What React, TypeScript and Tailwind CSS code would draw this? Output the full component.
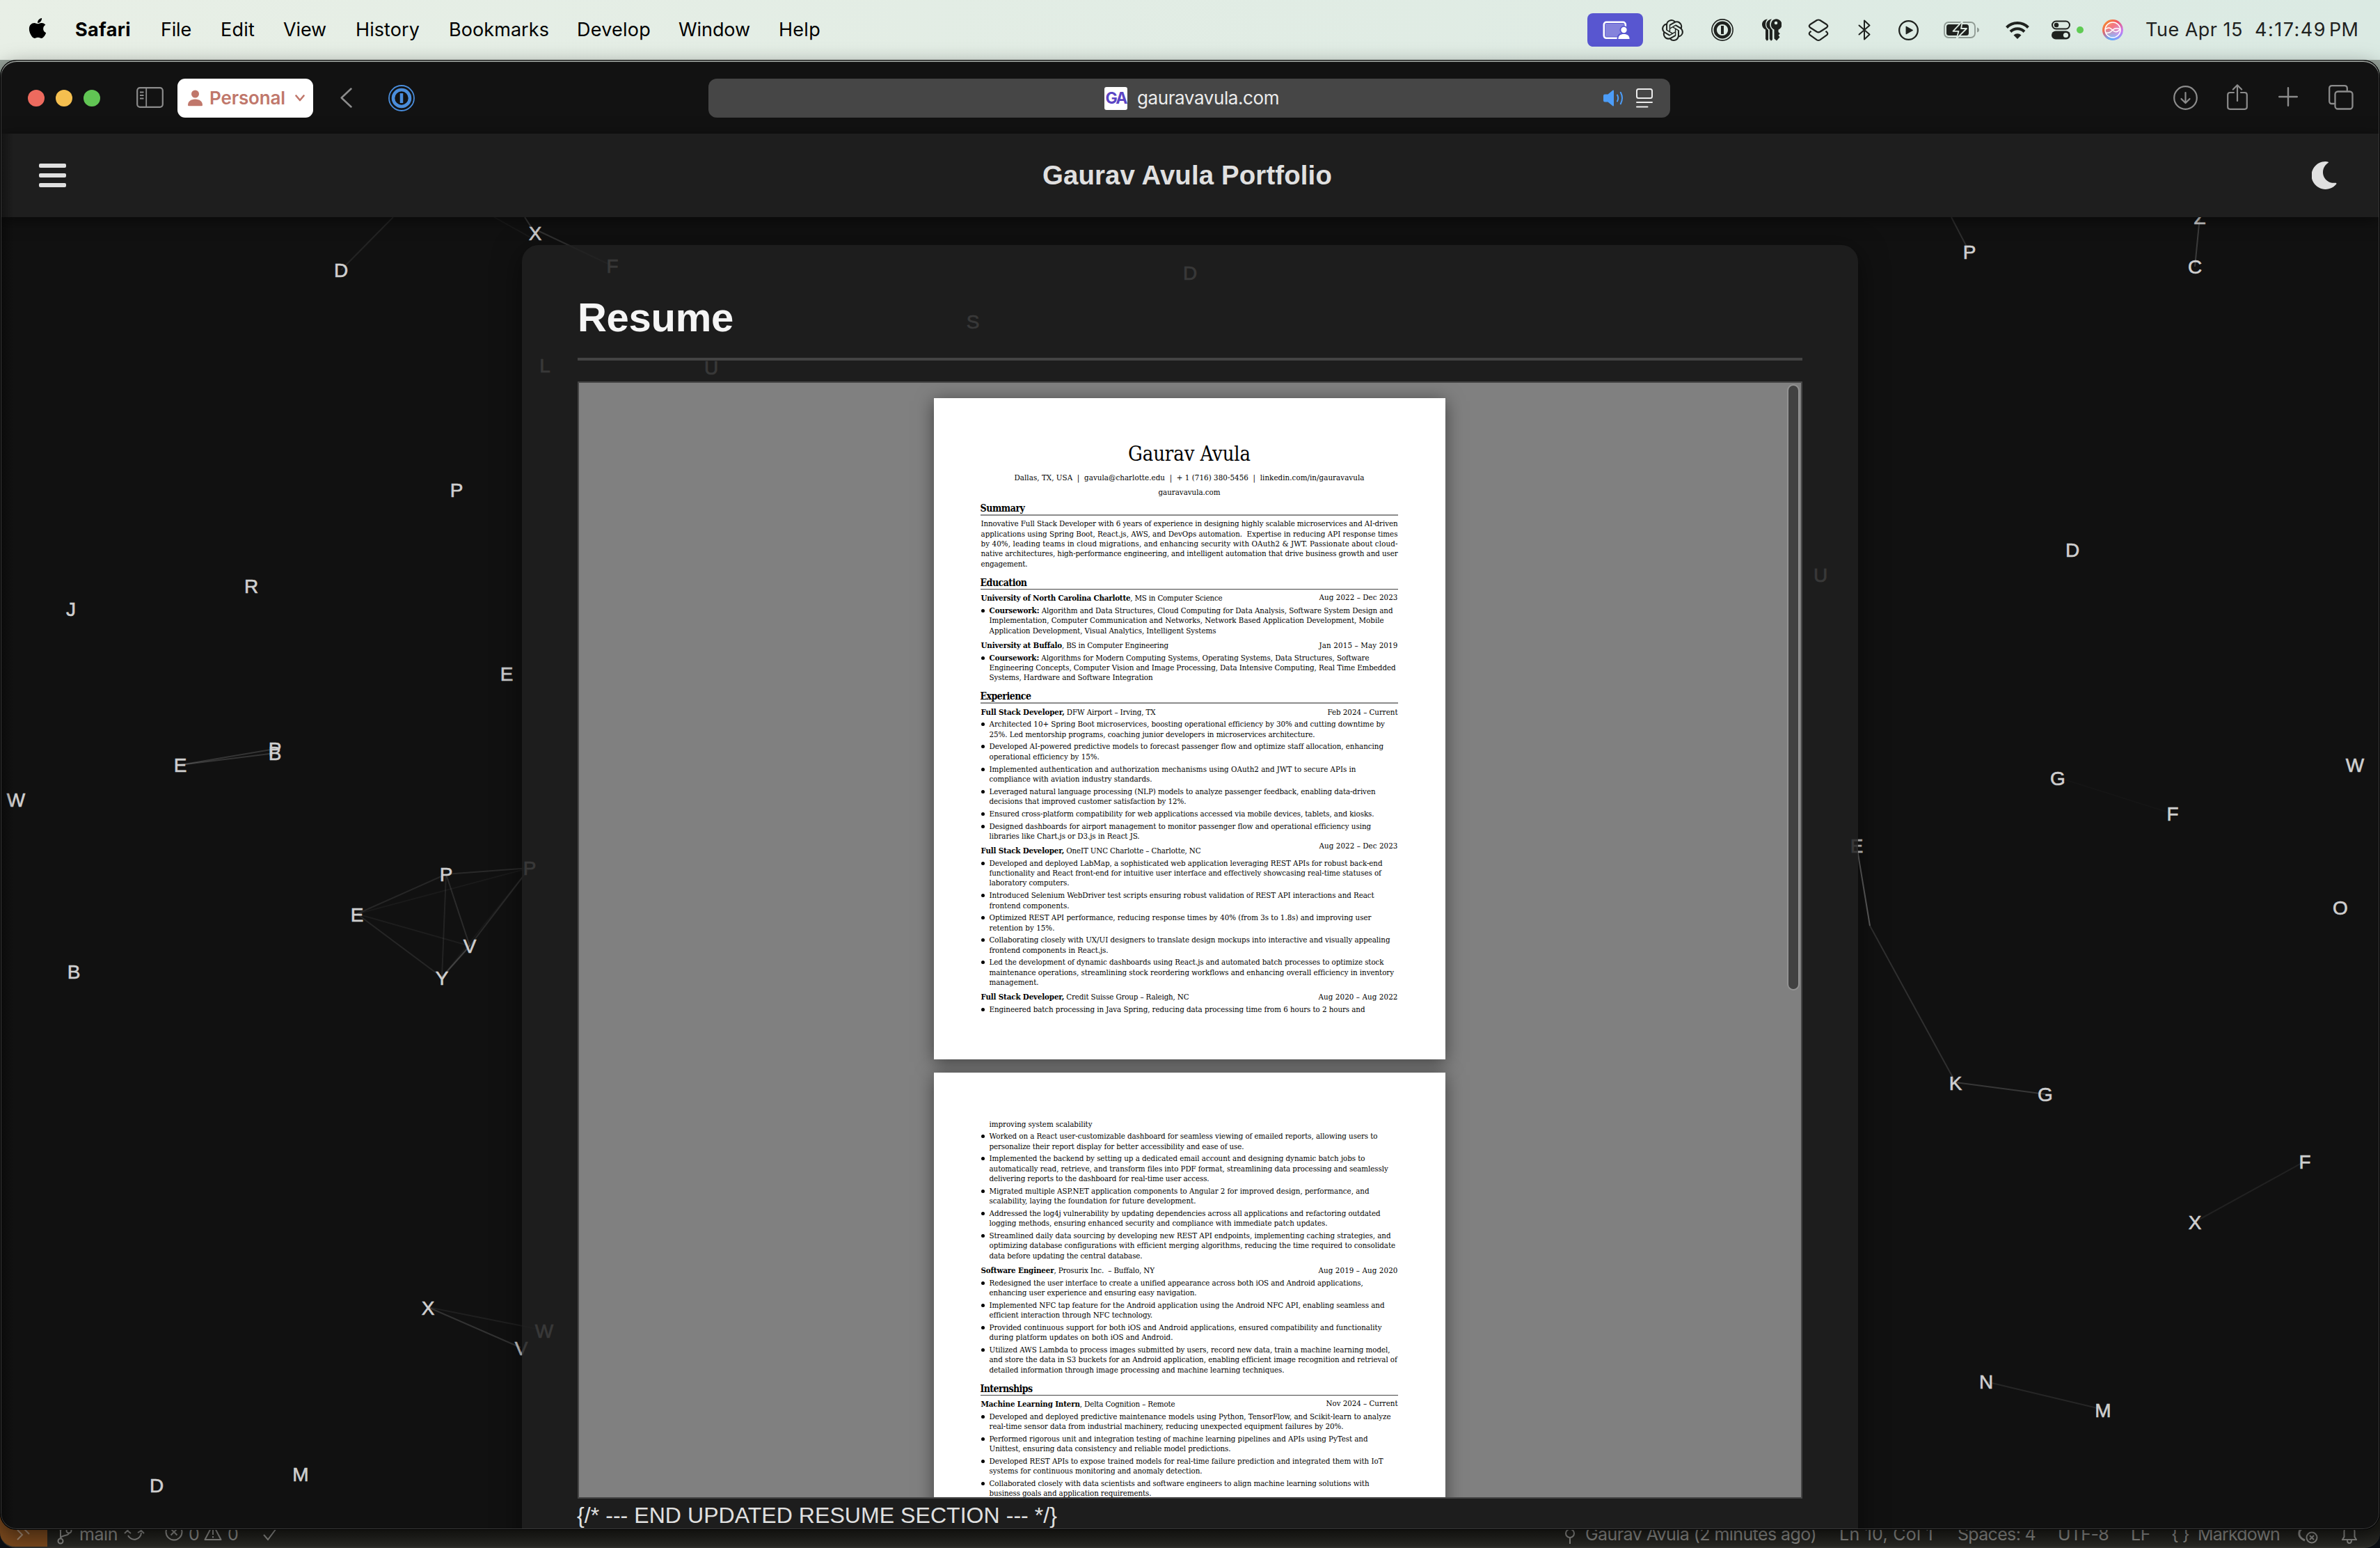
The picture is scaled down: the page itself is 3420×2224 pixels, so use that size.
import { useLayoutEffect, useRef, type ReactNode } from "react";
import { FaApple } from "react-icons/fa";
import { SiOpenai } from "react-icons/si";

/** Single-line label whose tracking is adjusted so that it spans exactly `w` pixels. */
function Fit({ w, className = "", children }: { w: number; className?: string; children: ReactNode }) {
  const ref = useRef<HTMLSpanElement>(null);
  useLayoutEffect(() => {
    const el = ref.current;
    if (!el) return;
    el.style.letterSpacing = "0px";
    const natural = el.getBoundingClientRect().width;
    const n = (el.textContent ?? "").length || 1;
    el.style.letterSpacing = `${(w - natural) / n}px`;
  }, [w]);
  return (
    <span ref={ref} className={`inline-block shrink-0 whitespace-pre ${className}`}>
      {children}
    </span>
  );
}

/* ------------------------------------------------------------------ menu bar */

const menus: { label: string; w: number; cell: string }[] = [
  { label: "File", w: 44, cell: "w-[86px]" },
  { label: "Edit", w: 49, cell: "w-[90px]" },
  { label: "View", w: 62, cell: "w-[104px]" },
  { label: "History", w: 92, cell: "w-[134px]" },
  { label: "Bookmarks", w: 144, cell: "w-[184px]" },
  { label: "Develop", w: 106, cell: "w-[146px]" },
  { label: "Window", w: 103, cell: "w-[144px]" },
  { label: "Help", w: 60, cell: "w-[80px]" },
];

function MenuBar() {
  return (
    <div className="flex h-[86px] shrink-0 items-center bg-linear-to-r from-[#e8efe6] to-[#dbeae3] text-[27px] leading-[34px] text-black">
      <FaApple className="ml-[39px] mb-[5px] h-[33px] w-[30px]" />
      <div className="ml-[39px] flex">
        <div className="w-[123px]">
          <Fit w={80} className="font-bold">Safari</Fit>
        </div>
        {menus.map((m) => (
          <div key={m.label} className={m.cell}>
            <Fit w={m.w}>{m.label}</Fit>
          </div>
        ))}
      </div>
      <div className="ml-auto flex items-center text-[#1f221f]">
        <div className="flex h-12 w-20 items-center justify-center rounded-[8px] bg-[#5856d0]">
          <svg className="ml-[3px] h-[27px] w-[40px]" viewBox="0 0 40 27" fill="none">
            <rect x="1.8" y="1.8" width="31" height="23" rx="3.5" stroke="#fff" strokeWidth="2.6" />
            <rect x="4" y="4" width="26.5" height="18.5" fill="#8583dc" />
            <circle cx="30.5" cy="13" r="6" fill="#5856d0" />
            <path d="M20.5 27c0-8 4-10 10-10s10 2 10 10z" fill="#5856d0" />
            <circle cx="30.5" cy="13" r="4.2" fill="#fff" />
            <path d="M22.4 26c0-4.500 3-7 8.100-7s8.100 2.500 8.100 7z" fill="#fff" />
          </svg>
        </div>
        <SiOpenai className="ml-[27px] size-[31px]" />
        <svg className="ml-[40px] size-8" viewBox="0 0 32 32" fill="none" stroke="currentColor">
          <circle cx="16" cy="16" r="15.1" strokeWidth="1.6" />
          <circle cx="16" cy="16" r="10.300" strokeWidth="4.400" />
          <path d="M16 10v12" strokeWidth="4" />
        </svg>
        <svg className="ml-[41px] h-8 w-[28px]" viewBox="0 0 28 32" fill="currentColor">
          <path d="M8 .5C3 .8 0 4 0 8.300c0 3.200 1.800 5.800 5 7.300V29l2 2.700 2-1.700V16C6 14 5 11 5 8.300 5 5 6 2 8 .5z" />
          <path d="M14 .5C9 1 6.200 4 6.200 8.300c0 3.200 1.800 5.800 4.600 7.300V29l2.200 2.700 2-1.700V16c-2.500-2-3.800-5-3.800-7.700C11.200 5 12 2 14 .5z" />
          <path
            fillRule="evenodd"
            d="M20 .3a8 8 0 0 1 3.500 15.400v3.300l2.300 2.300-2.300 2.500 2 2.500-4.500 5.200-3.500-3V15.500A8 8 0 0 1 20 .3zm0 3.400a2.300 2.300 0 1 0 0 4.600 2.300 2.300 0 0 0 0-4.600z"
          />
        </svg>
        <svg className="ml-[38px] h-[33px] w-[30px]" viewBox="0 0 30 33" fill="none" stroke="currentColor" strokeWidth="2.200" strokeLinejoin="round">
          <path d="M12.800 2q2.200-1 4.400 0L27 8.300q2.500 2 0 4.200l-9.800 6.300q-2.200 1.100-4.400 0L3 12.500Q.5 10.300 3 8.300z" />
          <path d="M4.600 17.800 3 19q-2.500 2.200 0 4.400l9.800 7q2.200 1.200 4.400 0l9.800-7q2.500-2.200 0-4.400l-1.600-1.200" />
        </svg>
        <svg className="ml-[41px] h-[30px] w-[20px]" viewBox="0 0 20 30" fill="none" stroke="currentColor" strokeWidth="2" strokeLinejoin="round" strokeLinecap="round">
          <path d="M2.500 8.500 17.500 21.500 10 28.500v-27l7.500 7L2.500 21.500" />
        </svg>
        <svg className="ml-[39px] size-[29px]" viewBox="0 0 28 28" fill="none">
          <circle cx="14" cy="14" r="12.900" stroke="currentColor" strokeWidth="2.200" />
          <path d="M10.200 9v10q0 .8.800.5l9-4.900q.6-.6 0-1.100l-9-5q-.8-.3-.8.5z" fill="currentColor" />
        </svg>
        <svg className="ml-[36px] h-[26px] w-[51px]" viewBox="0 0 51 26" fill="none">
          <rect x="1" y="2" width="44" height="22" rx="6" stroke="#8f9a93" strokeWidth="1.800" />
          <path d="M48 9.500q3 1 3 3.500t-3 3.500z" fill="#8f9a93" />
          <rect x="4" y="5" width="32" height="16" rx="3.500" fill="#1f221f" />
          <path d="M27 .5 13.500 14.800h8L18.500 25.500 33 11h-8z" fill="#1f221f" stroke="#deebe3" strokeWidth="1.800" strokeLinejoin="round" />
        </svg>
        <svg className="ml-[38px] h-[26px] w-[34px]" viewBox="0 0 34 26" fill="none" stroke="currentColor" strokeWidth="4">
          <path d="M1.500 9.500a22 22 0 0 1 31 0" />
          <path d="M7 15.500a14 14 0 0 1 20 0" />
          <path d="M17 26l-5.500-5.500a8 8 0 0 1 11 0z" fill="currentColor" stroke="none" />
        </svg>
        <svg className="ml-[32px] h-[28px] w-[27px]" viewBox="0 0 27 28" fill="none">
          <rect x="1" y="1.500" width="25" height="11" rx="5.500" stroke="#1f221f" strokeWidth="2" />
          <circle cx="7" cy="7" r="3.300" fill="#1f221f" />
          <rect x="0" y="15.500" width="27" height="12" rx="6" fill="#1f221f" />
          <circle cx="20.500" cy="21.500" r="3.600" fill="#deebe3" />
        </svg>
        <div className="ml-[9px] size-[10px] rounded-full bg-[#5fcb53]" />
        <svg className="ml-[27px] size-[30px]" viewBox="0 0 30 30" fill="none">
          <defs>
            <linearGradient id="siriBase" x1="0" y1="0" x2="1" y2="1">
              <stop offset="0" stopColor="#f5a623" />
              <stop offset="0.4" stopColor="#f2555f" />
              <stop offset="0.75" stopColor="#c77cf0" />
              <stop offset="1" stopColor="#58a8ff" />
            </linearGradient>
            <radialGradient id="siriBlue" cx="0.4" cy="1" r="0.600">
              <stop offset="0" stopColor="#4fb4ff" />
              <stop offset="1" stopColor="#4fb4ff" stopOpacity="0" />
            </radialGradient>
          </defs>
          <circle cx="15" cy="15" r="15" fill="url(#siriBase)" />
          <circle cx="15" cy="15" r="15" fill="url(#siriBlue)" />
          <circle cx="15" cy="15" r="11" fill="#fff" fillOpacity="0.200" stroke="#fff" strokeWidth="1.500" />
          <path d="M4.500 14c5-4 8-1 10.500 1.500s6 4 10.500-1.500M5 19c5 1 7-1 10-4s6-3 10.500-1" stroke="#fff" strokeWidth="1.500" />
        </svg>
        <div className="ml-[32px] mr-[31px] flex">
          <Fit w={140}>Tue Apr 15</Fit>
          <Fit w={103} className="ml-[17px]">4:17:49</Fit>
          <Fit w={42} className="ml-[4px]">PM</Fit>
        </div>
      </div>
    </div>
  );
}

/* ------------------------------------------------------------ browser toolbar */

function Toolbar() {
  return (
    <div className="flex h-[104px] shrink-0 items-center bg-[#121212] pt-[2px] text-[26px] leading-8 text-[#8c8c8c]">
      <div className="ml-[40px] flex gap-4">
        <div className="size-6 rounded-full bg-[#ed6a5e]" />
        <div className="size-6 rounded-full bg-[#f5bf4f]" />
        <div className="size-6 rounded-full bg-[#61c554]" />
      </div>
      <svg className="ml-[52px] mb-[2px] h-[30px] w-[39px]" viewBox="0 0 39 30" fill="none" stroke="currentColor" strokeWidth="2.200">
        <rect x="1.200" y="1.200" width="36.600" height="27.600" rx="4" />
        <path d="M14.200 1v28M5 7.500h5.500M5 12h5.500M5 16.500h5.500" strokeWidth="1.800" />
      </svg>
      <div className="ml-5 flex h-14 w-[195px] items-center rounded-[11px] bg-white text-[#c0776b]">
        <svg className="ml-[15px] h-[24px] w-[21px]" viewBox="0 0 21 24" fill="currentColor">
          <circle cx="10.500" cy="6" r="5.500" />
          <path d="M0 22c0-5 4-8.500 10.500-8.500S21 17 21 22q0 1.200-1.500 1.200h-18Q0 23.200 0 22z" />
        </svg>
        <Fit w={109} className="ml-[10px] font-semibold">Personal</Fit>
        <svg className="ml-[14px] h-[10px] w-[14px]" viewBox="0 0 14 10" fill="none" stroke="currentColor" strokeWidth="2.600" strokeLinecap="round" strokeLinejoin="round">
          <path d="M1.500 1.500 7 8l5.500-6.500" />
        </svg>
      </div>
      <svg className="ml-[39px] mb-[2px] h-[29px] w-[17px]" viewBox="0 0 17 29" fill="none" stroke="currentColor" strokeWidth="2.500" strokeLinecap="round" strokeLinejoin="round">
        <path d="M15.500 1.500 1.700 14.500l13.800 13" />
      </svg>
      <svg className="ml-[52px] size-[38px] text-[#4a8ddb]" viewBox="0 0 38 38" fill="none" stroke="currentColor">
        <circle cx="19" cy="19" r="18" strokeWidth="1.800" />
        <circle cx="19" cy="19" r="12" strokeWidth="4.600" />
        <path d="M19 12v14" strokeWidth="4.500" />
      </svg>
      <div className="ml-[422px] flex h-14 w-[1382px] items-center rounded-[12px] bg-[#464646] text-[#ececec]">
        <div className="ml-[569px] flex size-[33px] items-center justify-center rounded-[3px] bg-white text-[23px] font-bold leading-none text-[#5b45c4]">
          <Fit w={30}>GA</Fit>
        </div>
        <Fit w={204} className="ml-[14px]">gauravavula.com</Fit>
        <svg className="ml-auto h-[24px] w-[30px] text-[#4c9df8]" viewBox="0 0 30 24" fill="none" stroke="currentColor" strokeWidth="2" strokeLinecap="round">
          <path d="M2 6.500h4.500L13.500.8q1.500-.8 1.500 1v20.400q0 1.800-1.500 1L6.500 17.500H2q-2 0-2-2v-7q0-2 2-2z" fill="currentColor" stroke="none" />
          <path d="M20 7.500q2.500 4.500 0 9M24.800 3.800q4.400 8.200 0 16.400" />
        </svg>
        <svg className="ml-[17px] mr-[25px] h-[28px] w-[24px]" viewBox="0 0 24 28" fill="none" stroke="currentColor" strokeWidth="2" strokeLinecap="round">
          <rect x="1" y="1" width="22" height="13" rx="2.500" />
          <path d="M1 20h22M1 26.500h15.500" />
        </svg>
      </div>
      <svg className="ml-auto mb-[2px] size-[35px]" viewBox="0 0 35 35" fill="none" stroke="currentColor" strokeWidth="2.200" strokeLinecap="round" strokeLinejoin="round">
        <circle cx="17.500" cy="17.500" r="16.300" />
        <path d="M17.500 10v14.500M11.500 19l6 6 6-6" />
      </svg>
      <svg className="ml-[42px] mb-[4px] h-[37px] w-[30px]" viewBox="0 0 30 37" fill="none" stroke="currentColor" strokeWidth="2.200" strokeLinecap="round" strokeLinejoin="round">
        <path d="M10 12H4.500q-3.300 0-3.300 3.300v17.200q0 3.300 3.300 3.300h21q3.300 0 3.300-3.300V15.300q0-3.300-3.300-3.300H20M15 24V1.500M8.800 7.500 15 1.200l6.200 6.300" />
      </svg>
      <svg className="ml-[44px] mb-[4px] size-[28px]" viewBox="0 0 28 28" fill="none" stroke="currentColor" strokeWidth="2.400" strokeLinecap="round">
        <path d="M14 1.200v25.600M1.200 14h25.600" />
      </svg>
      <svg className="ml-[44px] mb-[2px] mr-[38px] size-[36px]" viewBox="0 0 36 36" fill="none" stroke="currentColor" strokeWidth="2.300" strokeLinecap="round" strokeLinejoin="round">
        <rect x="9.500" y="9.500" width="25" height="25" rx="4" />
        <path d="M8 27H5q-3.800 0-3.800-3.800V5Q1.200 1.200 5 1.200h18q3.800 0 3.800 3.800v2.800" />
      </svg>
    </div>
  );
}

/* -------------------------------------------------------- letter network field */

const letters: [string, number, number][] = [
  ["D", 490, 388], ["X", 769, 335], ["F", 880, 382], ["D", 1710, 392], ["S", 1398, 462],
  ["L", 783, 525], ["U", 1022, 528], ["P", 2830, 362], ["Z", 3161, 312], ["C", 3154, 383],
  ["P", 656, 704], ["J", 102, 875], ["R", 361, 842], ["E", 728, 968], ["E", 259, 1099],
  ["P", 395, 1076], ["B", 395, 1082], ["W", 23, 1149], ["P", 641, 1256], ["P", 761, 1247],
  ["E", 513, 1314], ["V", 675, 1359], ["Y", 635, 1405], ["B", 106, 1396], ["X", 615, 1879],
  ["V", 749, 1937], ["W", 782, 1912], ["D", 225, 2134], ["M", 432, 2118], ["U", 2616, 826],
  ["D", 2978, 790], ["W", 3384, 1099], ["G", 2957, 1118], ["F", 3122, 1169], ["E", 2668, 1215],
  ["O", 3363, 1304], ["K", 2810, 1556], ["G", 2939, 1572], ["F", 3312, 1669], ["X", 3154, 1756],
  ["N", 2854, 1985], ["M", 3022, 2026],
];

const links: [number, number, number, number, number][] = [
  [490, 388, 565, 312, 0.08], [769, 335, 754, 312, 0.16], [710, 312, 769, 345, 0.04], [770, 330, 880, 382, 0.14],
  [2804, 312, 2830, 362, 0.12], [3161, 312, 3154, 383, 0.18], [259, 1099, 395, 1076, 0.15], [259, 1099, 395, 1082, 0.15],
  [641, 1256, 513, 1313, 0.09], [641, 1256, 761, 1247, 0.1], [641, 1256, 675, 1359, 0.11], [641, 1256, 635, 1404, 0.08],
  [513, 1313, 675, 1359, 0.05], [513, 1313, 635, 1404, 0.09], [675, 1359, 635, 1404, 0.2], [761, 1247, 675, 1359, 0.1],
  [761, 1247, 513, 1313, 0.04], [761, 1247, 635, 1404, 0.03], [615, 1878, 748, 1936, 0.14], [615, 1878, 781, 1911, 0.06],
  [2668, 1215, 2687, 1330, 0.32], [2687, 1330, 2810, 1555, 0.13], [2810, 1555, 2939, 1572, 0.16], [3311, 1669, 3153, 1756, 0.07],
  [2854, 1985, 3022, 2025, 0.09], [2957, 1117, 3122, 1169, 0.02],
];

function LetterField() {
  return (
    <svg className="absolute inset-0 h-full w-full" viewBox="0 312 3420 1885" preserveAspectRatio="xMinYMin slice">
      {links.map(([x1, y1, x2, y2, o], i) => (
        <line key={i} x1={x1} y1={y1} x2={x2} y2={y2} stroke="#fff" strokeOpacity={o} strokeWidth="2" />
      ))}
      {letters.map(([ch, x, y], i) => (
        <text
          key={i}
          x={x}
          y={y + 10}
          textAnchor="middle"
          fill="#cfcfcf"
          stroke="#cfcfcf"
          strokeWidth="0.6"
          className="font-['Liberation_Sans',sans-serif] text-[28px]"
        >
          {ch}
        </text>
      ))}
    </svg>
  );
}

/* --------------------------------------------------------------- PDF document */

type Row =
  | { k: "rule"; y: number; thin?: boolean }
  | { k: "head"; y: number; w: number; t: string }
  | { k: "name" | "center" | "para"; y: number; w: number; t: string }
  | { k: "job"; y: number; w: number; b: string; t: string; date: string; dw: number; lift?: number }
  | { k: "item" | "cont"; y: number; w: number; t: string; b?: string };

const page1: Row[] = [
  { k: "name", y: 663, w: 176, t: "Gaurav Avula" },
  { k: "center", y: 690, w: 503, t: "Dallas, TX, USA  |  gavula@charlotte.edu  |  + 1 (716) 380-5456  |  linkedin.com/in/gauravavula" },
  { k: "center", y: 711, w: 89, t: "gauravavula.com" },
  { k: "head", y: 734, w: 64, t: "Summary" },
  { k: "rule", y: 740 },
  { k: "para", y: 756, w: 599, t: "Innovative Full Stack Developer with 6 years of experience in designing highly scalable microservices and AI-driven" },
  { k: "para", y: 771, w: 599, t: "applications using Spring Boot, React.js, AWS, and DevOps automation.  Expertise in reducing API response times" },
  { k: "para", y: 785, w: 599, t: "by 40%, leading teams in cloud migrations, and enhancing security with OAuth2 & JWT. Passionate about cloud-" },
  { k: "para", y: 799, w: 599, t: "native architectures, high-performance engineering, and intelligent automation that drive business growth and user" },
  { k: "para", y: 814, w: 67, t: "engagement." },
  { k: "head", y: 841, w: 67, t: "Education" },
  { k: "rule", y: 846, thin: true },
  { k: "job", y: 863, w: 347, b: "University of North Carolina Charlotte", t: ", MS in Computer Science", date: "Aug 2022 – Dec 2023", dw: 113, lift: 1 },
  { k: "item", y: 881, w: 580, b: "Coursework:", t: " Algorithm and Data Structures, Cloud Computing for Data Analysis, Software System Design and" },
  { k: "cont", y: 895, w: 567, t: "Implementation, Computer Communication and Networks, Network Based Application Development, Mobile" },
  { k: "cont", y: 910, w: 326, t: "Application Development, Visual Analytics, Intelligent Systems" },
  { k: "job", y: 931, w: 269, b: "University at Buffalo", t: ", BS in Computer Engineering", date: "Jan 2015 – May 2019", dw: 113 },
  { k: "item", y: 949, w: 546, b: "Coursework:", t: " Algorithms for Modern Computing Systems, Operating Systems, Data Structures, Software" },
  { k: "cont", y: 963, w: 584, t: "Engineering Concepts, Computer Vision and Image Processing, Data Intensive Computing, Real Time Embedded" },
  { k: "cont", y: 977, w: 235, t: "Systems, Hardware and Software Integration" },
  { k: "head", y: 1004, w: 73, t: "Experience" },
  { k: "rule", y: 1010 },
  { k: "job", y: 1027, w: 251, b: "Full Stack Developer,", t: " DFW Airport – Irving, TX", date: "Feb 2024 – Current", dw: 101 },
  { k: "item", y: 1044, w: 568, t: "Architected 10+ Spring Boot microservices, boosting operational efficiency by 30% and cutting downtime by" },
  { k: "cont", y: 1059, w: 468, t: "25%. Led mentorship programs, coaching junior developers in microservices architecture." },
  { k: "item", y: 1076, w: 566, t: "Developed AI-powered predictive models to forecast passenger flow and optimize staff allocation, enhancing" },
  { k: "cont", y: 1091, w: 158, t: "operational efficiency by 15%." },
  { k: "item", y: 1109, w: 527, t: "Implemented authentication and authorization mechanisms using OAuth2 and JWT to secure APIs in" },
  { k: "cont", y: 1123, w: 234, t: "compliance with aviation industry standards." },
  { k: "item", y: 1141, w: 555, t: "Leveraged natural language processing (NLP) models to analyze passenger feedback, enabling data-driven" },
  { k: "cont", y: 1155, w: 283, t: "decisions that improved customer satisfaction by 12%." },
  { k: "item", y: 1173, w: 553, t: "Ensured cross-platform compatibility for web applications accessed via mobile devices, tablets, and kiosks." },
  { k: "item", y: 1191, w: 548, t: "Designed dashboards for airport management to monitor passenger flow and operational efficiency using" },
  { k: "cont", y: 1205, w: 216, t: "libraries like Chart.js or D3.js in React JS." },
  { k: "job", y: 1226, w: 316, b: "Full Stack Developer,", t: " OneIT UNC Charlotte – Charlotte, NC", date: "Aug 2022 – Dec 2023", dw: 113, lift: 7 },
  { k: "item", y: 1244, w: 565, t: "Developed and deployed LabMap, a sophisticated web application leveraging REST APIs for robust back-end" },
  { k: "cont", y: 1258, w: 563, t: "functionality and React front-end for intuitive user interface and effectively showcasing real-time statuses of" },
  { k: "cont", y: 1272, w: 115, t: "laboratory computers." },
  { k: "item", y: 1290, w: 553, t: "Introduced Selenium WebDriver test scripts ensuring robust validation of REST API interactions and React" },
  { k: "cont", y: 1305, w: 115, t: "frontend components." },
  { k: "item", y: 1322, w: 549, t: "Optimized REST API performance, reducing response times by 40% (from 3s to 1.8s) and improving user" },
  { k: "cont", y: 1337, w: 94, t: "retention by 15%." },
  { k: "item", y: 1354, w: 576, t: "Collaborating closely with UX/UI designers to translate design mockups into interactive and visually appealing" },
  { k: "cont", y: 1369, w: 171, t: "frontend components in React.js." },
  { k: "item", y: 1386, w: 567, t: "Led the development of dynamic dashboards using React.js and automated batch processes to optimize stock" },
  { k: "cont", y: 1401, w: 581, t: "maintenance operations, streamlining stock reordering workflows and enhancing overall efficiency in inventory" },
  { k: "cont", y: 1415, w: 71, t: "management." },
  { k: "job", y: 1436, w: 299, b: "Full Stack Developer,", t: " Credit Suisse Group – Raleigh, NC", date: "Aug 2020 – Aug 2022", dw: 114 },
  { k: "item", y: 1454, w: 540, t: "Engineered batch processing in Java Spring, reducing data processing time from 6 hours to 2 hours and" },
];

const page2: Row[] = [
  { k: "cont", y: 1619, w: 148, t: "improving system scalability" },
  { k: "item", y: 1636, w: 558, t: "Worked on a React user-customizable dashboard for seamless viewing of emailed reports, allowing users to" },
  { k: "cont", y: 1651, w: 366, t: "personalize their report display for better accessibility and ease of use." },
  { k: "item", y: 1668, w: 540, t: "Implemented the backend by setting up a dedicated email account and designing dynamic batch jobs to" },
  { k: "cont", y: 1683, w: 573, t: "automatically read, retrieve, and transform files into PDF format, streamlining data processing and seamlessly" },
  { k: "cont", y: 1697, w: 316, t: "delivering reports to the dashboard for real-time user access." },
  { k: "item", y: 1715, w: 546, t: "Migrated multiple ASP.NET application components to Angular 2 for improved design, performance, and" },
  { k: "cont", y: 1729, w: 297, t: "scalability, laying the foundation for future development." },
  { k: "item", y: 1747, w: 562, t: "Addressed the log4j vulnerability by updating dependencies across all applications and refactoring outdated" },
  { k: "cont", y: 1761, w: 486, t: "logging methods, ensuring enhanced security and compliance with immediate patch updates." },
  { k: "item", y: 1779, w: 577, t: "Streamlined daily data sourcing by developing new REST API endpoints, implementing caching strategies, and" },
  { k: "cont", y: 1793, w: 583, t: "optimizing database configurations with efficient merging algorithms, reducing the time required to consolidate" },
  { k: "cont", y: 1808, w: 220, t: "data before updating the central database." },
  { k: "job", y: 1829, w: 249, b: "Software Engineer", t: ", Prosurix Inc.  – Buffalo, NY", date: "Aug 2019 – Aug 2020", dw: 114 },
  { k: "item", y: 1847, w: 537, t: "Redesigned the user interface to create a unified appearance across both iOS and Android applications," },
  { k: "cont", y: 1861, w: 298, t: "enhancing user experience and ensuring easy navigation." },
  { k: "item", y: 1879, w: 568, t: "Implemented NFC tap feature for the Android application using the Android NFC API, enabling seamless and" },
  { k: "cont", y: 1893, w: 234, t: "efficient interaction through NFC technology." },
  { k: "item", y: 1911, w: 564, t: "Provided continuous support for both iOS and Android applications, ensured compatibility and functionality" },
  { k: "cont", y: 1925, w: 264, t: "during platform updates on both iOS and Android." },
  { k: "item", y: 1943, w: 576, t: "Utilized AWS Lambda to process images submitted by users, record new data, train a machine learning model," },
  { k: "cont", y: 1957, w: 586, t: "and store the data in S3 buckets for an Android application, enabling efficient image recognition and retrieval of" },
  { k: "cont", y: 1972, w: 424, t: "detailed information through image processing and machine learning techniques." },
  { k: "head", y: 1999, w: 75, t: "Internships" },
  { k: "rule", y: 2004, thin: true },
  { k: "job", y: 2021, w: 279, b: "Machine Learning Intern", t: ", Delta Cognition – Remote", date: "Nov 2024 – Current", dw: 103, lift: 1 },
  { k: "item", y: 2039, w: 577, t: "Developed and deployed predictive maintenance models using Python, TensorFlow, and Scikit-learn to analyze" },
  { k: "cont", y: 2053, w: 509, t: "real-time sensor data from industrial machinery, reducing unexpected equipment failures by 20%." },
  { k: "item", y: 2071, w: 544, t: "Performed rigorous unit and integration testing of machine learning pipelines and APIs using PyTest and" },
  { k: "cont", y: 2085, w: 347, t: "Unittest, ensuring data consistency and reliable model predictions." },
  { k: "item", y: 2103, w: 566, t: "Developed REST APIs to expose trained models for real-time failure prediction and integrated them with IoT" },
  { k: "cont", y: 2117, w: 306, t: "systems for continuous monitoring and anomaly detection." },
  { k: "item", y: 2135, w: 546, t: "Collaborated closely with data scientists and software engineers to align machine learning solutions with" },
  { k: "cont", y: 2149, w: 233, t: "business goals and application requirements." },
];

function RowView({ row, height }: { row: Row; height: number }) {
  const style = { height };
  switch (row.k) {
    case "rule":
      return (
        <div
          className={row.thin ? "-ml-px border-b border-[#444444]" : "-ml-px border-b-2 border-[#8c8c8c]"}
          style={style}
        />
      );
    case "head":
      return (
        <div className="-ml-px flex items-end text-[14px] font-bold" style={style}>
          <Fit w={row.w}>{row.t}</Fit>
        </div>
      );
    case "name":
      return (
        <div className="flex items-end justify-center pb-[1px] text-[29px] leading-[26px]" style={style}>
          <Fit w={row.w}>{row.t}</Fit>
        </div>
      );
    case "center":
      return (
        <div className="flex items-end justify-center" style={style}>
          <Fit w={row.w}>{row.t}</Fit>
        </div>
      );
    case "para":
      return (
        <div className="flex items-end" style={style}>
          <Fit w={row.w}>{row.t}</Fit>
        </div>
      );
    case "job":
      return (
        <div className="flex items-end justify-between" style={style}>
          <Fit w={row.w}>
            <b>{row.b}</b>
            {row.t}
          </Fit>
          <div style={{ paddingBottom: row.lift ?? 0 }} className="flex">
            <Fit w={row.dw}>{row.date}</Fit>
          </div>
        </div>
      );
    default:
      return (
        <div className="flex items-end" style={style}>
          <div className="flex h-[14px] w-3 shrink-0 items-center pt-px">
            {row.k === "item" && <div className="size-[5px] rounded-full bg-black" />}
          </div>
          <Fit w={row.w}>
            {row.b && <b>{row.b}</b>}
            {row.t}
          </Fit>
        </div>
      );
  }
}

function Page({ rows, top }: { rows: Row[]; top: number }) {
  let cursor = top;
  return (
    <div className="h-[950px] w-[735px] shrink-0 bg-white pl-[68px] pr-[68px] font-['DejaVu_Serif_Condensed','DejaVu_Serif',serif] text-[11.500px] leading-[14px] text-black shadow-[0_4px_24px_rgba(0,0,0,0.5)]">
      {rows.map((row, i) => {
        const bottom = row.k === "rule" ? row.y + 1 : row.y + 3;
        const height = bottom - cursor;
        cursor = bottom;
        return <RowView key={i} row={row} height={height} />;
      })}
    </div>
  );
}

/* ------------------------------------------------------------------ web page */

function SiteHeader() {
  return (
    <div className="relative z-10 flex h-[120px] shrink-0 items-center justify-between bg-[#1e1e1e] pl-[56px] pr-[62px] shadow-[0_4px_20px_rgba(0,0,0,0.5)]">
      <div className="flex w-[34px] flex-col gap-2">
        <div className="h-[6px] w-[39px] rounded-[2px] bg-[#e0e0e0]" />
        <div className="h-[6px] w-[39px] rounded-[2px] bg-[#e0e0e0]" />
        <div className="h-[6px] w-[39px] rounded-[2px] bg-[#e0e0e0]" />
      </div>
      <Fit w={416} className="font-['Liberation_Sans',sans-serif] text-[38.400px] font-bold text-[#e0e0e0]">
        Gaurav Avula Portfolio
      </Fit>
      <svg className="h-10 w-[36px]" viewBox="0 0 36 40" fill="#e0e0e0">
        <path d="M20 0q4.800.3 3.800 1.700C18.800 5 16 9.800 16 15.500c0 9 7.500 16.300 17.500 15.200 1.700-.2 2.500.8 1.500 2A20 20 0 1 1 20 0z" />
      </svg>
    </div>
  );
}

function WebPage() {
  return (
    <div className="relative flex min-h-0 flex-1 flex-col">
      <SiteHeader />
      <div className="relative flex min-h-0 flex-1 justify-center overflow-hidden bg-[#111111]">
        <LetterField />
        <div className="relative mt-10 flex h-[1900px] w-[1920px] flex-col rounded-[24px] bg-[#1f1f1f]/86 px-20 shadow-[0_8px_40px_rgba(0,0,0,0.5)]">
          <div className="flex h-[166px] shrink-0 items-end border-b-4 border-[#444444] pb-[26px]">
            <Fit w={224} className="font-['Liberation_Sans',sans-serif] text-[58px] font-bold leading-[64px] text-[#f5f5f5]">
              Resume
            </Fit>
          </div>
          <div className="mt-[30px] flex h-[1605px] shrink-0 overflow-hidden border-2 border-[#464646] bg-[#808080]">
            <div className="flex flex-1 flex-col items-center gap-[19px] pl-[18px] pt-[22px]">
              <Page rows={page1} top={572} />
              <Page rows={page2} top={1541} />
            </div>
            <div className="flex w-[20px] pt-[2px]">
              <div className="h-[871px] w-[18px] rounded-full border-2 border-[#939393] bg-[#414141]" />
            </div>
          </div>
          <Fit w={690} className="-ml-px mt-[4px] self-start font-['Liberation_Sans',sans-serif] text-[32px] leading-[40px] text-[#e0e0e0]">
            {"{/* --- END UPDATED RESUME SECTION --- */}"}
          </Fit>
        </div>
      </div>
      <div className="absolute inset-y-0 left-0 z-20 w-5 bg-linear-to-r from-black/40 to-transparent" />
    </div>
  );
}

/* ---------------------------------------------------- editor behind the browser */

function EditorStatusBar() {
  return (
    <div className="absolute inset-x-0 bottom-0 flex h-[90px] items-end overflow-hidden rounded-b-[22px] border-b-2 border-[#32322e] bg-linear-to-b from-[#1c1c18] from-70% to-[#2b2b27] text-[25px] leading-8 text-[#8d8d8a]">
      <div className="flex h-full w-[68px] items-end bg-[#7c4a1e] pb-[9px] pl-[22px] text-[#a98f78]">
        <svg className="h-6 w-[22px]" viewBox="0 0 22 24" fill="none" stroke="currentColor" strokeWidth="2">
          <path d="m3 9 7 7-7 7M20 1l-7 7 7 7" />
        </svg>
      </div>
      <svg className="mb-[3px] ml-[14px] h-[30px] w-[22px]" viewBox="0 0 22 30" fill="none" stroke="currentColor" strokeWidth="2">
        <circle cx="5" cy="5" r="3.500" />
        <circle cx="17" cy="10" r="3.500" />
        <circle cx="5" cy="25" r="3.500" />
        <path d="M5 8.500v13M17 13.500c0 5-12 2-12 8" />
      </svg>
      <Fit w={55} className="mb-[2px] ml-[10px]">main</Fit>
      <svg className="mb-[8px] ml-[9px] h-6 w-[30px]" viewBox="0 0 30 24" fill="none" stroke="currentColor" strokeWidth="2">
        <path d="M5 11a10 10 0 0 1 19-3M25 12a10 10 0 0 1-19 4M1 13l4-4 5 4M20 12l5-3 4 4" />
      </svg>
      <svg className="mb-[8px] ml-[29px] size-[26px]" viewBox="0 0 26 26" fill="none" stroke="currentColor" strokeWidth="2">
        <circle cx="13" cy="13" r="11.500" />
        <path d="m8.500 8.500 9 9m0-9-9 9" />
      </svg>
      <span className="mb-[2px] ml-[8px] w-[22px]">0</span>
      <svg className="mb-[8px] size-[26px]" viewBox="0 0 26 26" fill="none" stroke="currentColor" strokeWidth="2" strokeLinejoin="round">
        <path d="M13 2 24.500 24h-23zM13 10v7M13 19v2.500" />
      </svg>
      <span className="mb-[2px] ml-[8px]">0</span>
      <svg className="mb-[8px] ml-[34px] h-5 w-[22px]" viewBox="0 0 22 20" fill="none" stroke="currentColor" strokeWidth="2">
        <path d="m2 11 6 7L20 2" />
      </svg>
      <svg className="ml-auto mb-[4px] h-[28px] w-[14px]" viewBox="0 0 14 28" fill="none" stroke="currentColor" strokeWidth="2">
        <circle cx="7" cy="13" r="6" />
        <path d="M7 0v7M7 19v9" />
      </svg>
      <Fit w={332} className="mb-[2px] ml-[15px]">Gaurav Avula (2 minutes ago)</Fit>
      <Fit w={135} className="mb-[2px] ml-[33px]">Ln 10, Col 1</Fit>
      <Fit w={112} className="mb-[2px] ml-[35px]">Spaces: 4</Fit>
      <Fit w={73} className="mb-[2px] ml-[32px]">UTF-8</Fit>
      <Fit w={28} className="mb-[2px] ml-[32px]">LF</Fit>
      <Fit w={26} className="mb-[2px] ml-[30px]">{"{ }"}</Fit>
      <Fit w={118} className="mb-[2px] ml-[12px]">Markdown</Fit>
      <svg className="mb-[4px] ml-[26px] size-[29px]" viewBox="0 0 29 29" fill="none" stroke="currentColor" strokeWidth="2">
        <path d="M10 24C5 22 1 18 2 13c0-3 2-4 2-4C5 3 8 2 14 4c6-2 9-1 10 5" strokeWidth="3" />
        <circle cx="20" cy="20" r="7.500" />
        <path d="m17 17 6 6m0-6-6 6" />
      </svg>
      <svg className="mb-[4px] ml-[34px] mr-[33px] h-[28px] w-[22px]" viewBox="0 0 22 28" fill="none" stroke="currentColor" strokeWidth="2">
        <path d="M1 22h20l-2.500-4v-8a7.500 7.500 0 0 0-15 0v8zM8 23q0 4 3 4t3-4" />
      </svg>
    </div>
  );
}

export default function App() {
  return (
    <div className="flex h-[2224px] w-[3420px] flex-col overflow-hidden bg-[#0c0f14] font-['Inter',sans-serif]">
      <MenuBar />
      <div className="relative flex flex-1 flex-col bg-linear-to-b from-[#98a39b] to-[#0c0f14] to-40%">
        <EditorStatusBar />
        <div className="relative flex h-[2112px] flex-col overflow-hidden rounded-[24px] bg-[#121212] pb-px pt-[2px] shadow-[0_10px_30px_rgba(0,0,0,0.5)]">
          <Toolbar />
          <WebPage />
          <div className="pointer-events-none absolute inset-0 z-30 rounded-[24px] border border-black shadow-[inset_0_2px_0_0_#8a8f8b,inset_0_0_0_1px_#3a3a3a]" />
        </div>
      </div>
    </div>
  );
}
